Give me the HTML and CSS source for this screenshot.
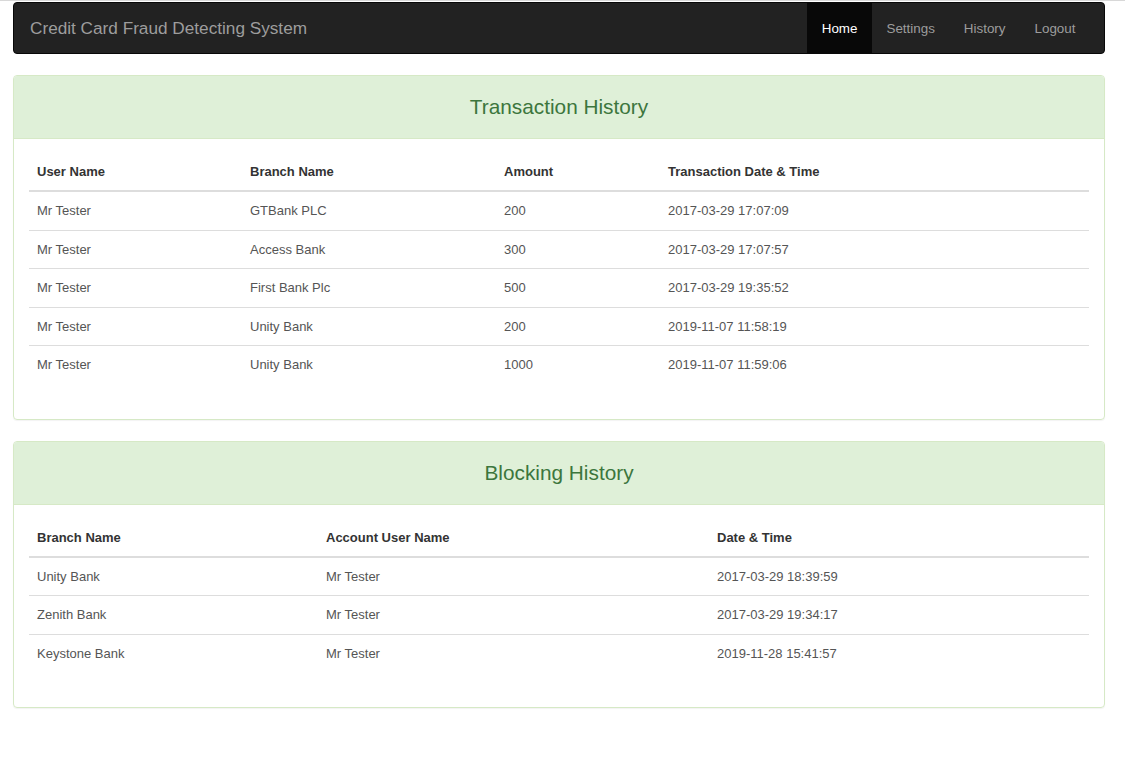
FILE: index.html
```html
<!DOCTYPE html>
<html>
<head>
<meta charset="utf-8">
<link rel="stylesheet" href="styles.css">
<title>Credit Card Fraud Detecting System</title>
</head>
<body>
<div class="topline"></div>
<div class="page">
  <nav class="navbar">
    <div class="brand">Credit Card Fraud Detecting System</div>
    <ul class="nav">
      <li class="active"><a>Home</a></li>
      <li><a>Settings</a></li>
      <li><a>History</a></li>
      <li><a>Logout</a></li>
    </ul>
  </nav>

  <div class="panel">
    <div class="panel-heading">Transaction History</div>
    <div class="panel-body">
      <table class="table t1">
        <colgroup><col class="c1"><col class="c2"><col class="c3"><col></colgroup>
        <thead><tr><th>User Name</th><th>Branch Name</th><th>Amount</th><th>Transaction Date &amp; Time</th></tr></thead>
        <tbody>
          <tr><td>Mr Tester</td><td>GTBank PLC</td><td>200</td><td>2017-03-29 17:07:09</td></tr>
          <tr><td>Mr Tester</td><td>Access Bank</td><td>300</td><td>2017-03-29 17:07:57</td></tr>
          <tr><td>Mr Tester</td><td>First Bank Plc</td><td>500</td><td>2017-03-29 19:35:52</td></tr>
          <tr><td>Mr Tester</td><td>Unity Bank</td><td>200</td><td>2019-11-07 11:58:19</td></tr>
          <tr><td>Mr Tester</td><td>Unity Bank</td><td>1000</td><td>2019-11-07 11:59:06</td></tr>
        </tbody>
      </table>
    </div>
  </div>

  <div class="panel">
    <div class="panel-heading">Blocking History</div>
    <div class="panel-body">
      <table class="table t2">
        <colgroup><col class="d1"><col class="d2"><col></colgroup>
        <thead><tr><th>Branch Name</th><th>Account User Name</th><th>Date &amp; Time</th></tr></thead>
        <tbody>
          <tr><td>Unity Bank</td><td>Mr Tester</td><td>2017-03-29 18:39:59</td></tr>
          <tr><td>Zenith Bank</td><td>Mr Tester</td><td>2017-03-29 19:34:17</td></tr>
          <tr><td>Keystone Bank</td><td>Mr Tester</td><td>2019-11-28 15:41:57</td></tr>
        </tbody>
      </table>
    </div>
  </div>
</div>
</body>
</html>
```

FILE: styles.css
```css
html, body {
  margin: 0;
  padding: 0;
  background: #fff;
  font-family: "Liberation Sans", Arial, sans-serif;
  font-size: 13px;
  color: #555;
}
.topline {
  height: 1px;
  background: #d8d8d8;
}
.page {
  width: 1092px;
  margin: 0 0 0 13px;
  padding-top: 1px;
}
.navbar {
  display: flex;
  justify-content: space-between;
  align-items: stretch;
  height: 52px;
  background: #222;
  border: 1px solid #080808;
  box-sizing: border-box;
  border-radius: 4px;
  margin-bottom: 21px;
}
.brand {
  display: flex;
  align-items: center;
  padding-left: 16px;
  font-size: 17.2px;
  color: #9d9d9d;
}
.nav {
  display: flex;
  list-style: none;
  margin: 0 14px 0 0;
  padding: 0;
}
.nav li {
  display: flex;
}
.nav a {
  display: flex;
  align-items: center;
  padding: 0 14.5px;
  color: #9d9d9d;
  font-size: 13.4px;
}
.nav li.active a {
  background: #080808;
  color: #fff;
}
.panel {
  border: 1px solid #d6e9c6;
  border-radius: 4px;
  margin-bottom: 21px;
  box-shadow: 0 1px 1px rgba(0,0,0,0.05);
}
.panel-heading {
  background: #dff0d8;
  color: #3c763d;
  height: 62px;
  display: flex;
  align-items: center;
  justify-content: center;
  font-size: 20.8px;
  border-bottom: 1px solid #d6e9c6;
  border-radius: 3px 3px 0 0;
}
.panel-body {
  padding: 15px 15px 35px 15px;
}
.table {
  width: 100%;
  border-collapse: collapse;
  table-layout: fixed;
}
.table th {
  text-align: left;
  font-weight: bold;
  color: #333;
  padding: 8px;
  line-height: 20px;
  border-bottom: 2px solid #ddd;
}
.table td {
  padding: 8px;
  line-height: 21.5px;
  border-top: 1px solid #ddd;
}
.table tbody tr:first-child td {
  border-top: 0;
}
.t1 .c1 { width: 213px; }
.t1 .c2 { width: 254px; }
.t1 .c3 { width: 164px; }
.t2 .d1 { width: 289px; }
.t2 .d2 { width: 391px; }
```
